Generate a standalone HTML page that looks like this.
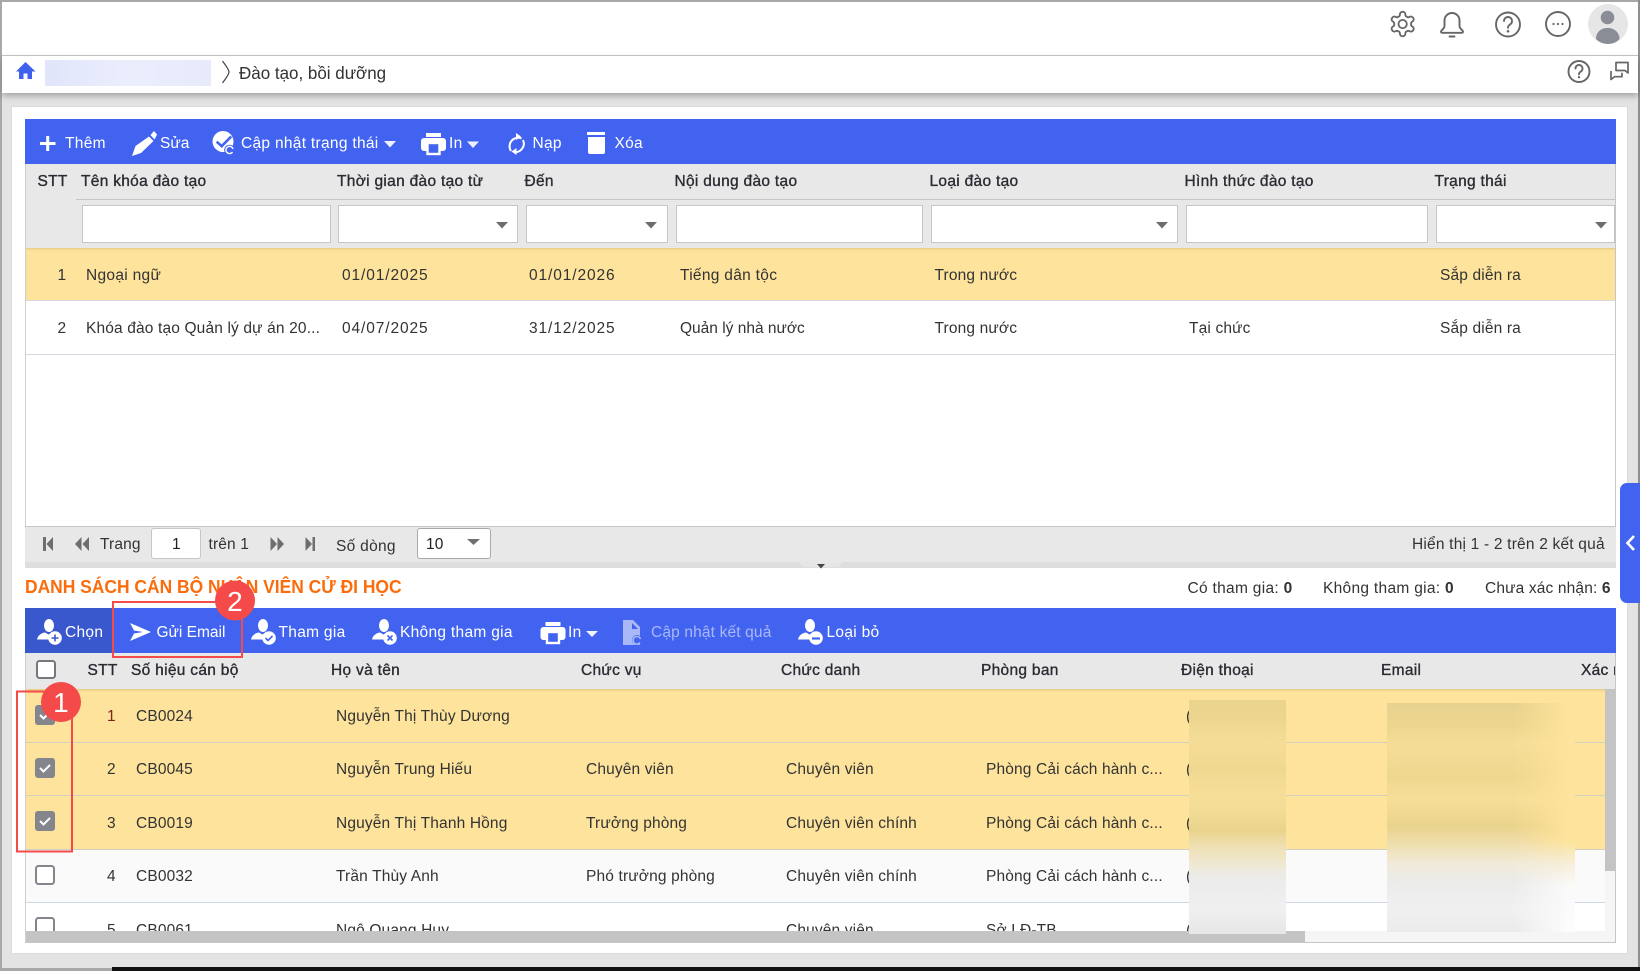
<!DOCTYPE html>
<html lang="vi"><head><meta charset="utf-8"><title>Đào tạo, bồi dưỡng</title>
<style>
html,body{margin:0;padding:0;width:1640px;height:971px;overflow:hidden;background:#e3e3e3}
body{position:relative;font-family:"Liberation Sans","Noto Sans CJK SC",sans-serif;font-size:15.5px;letter-spacing:.15px;color:#333}
.b{position:absolute}
.t{position:absolute;white-space:nowrap;line-height:20px;height:20px}
.h{-webkit-text-stroke:.35px currentColor;color:#2b2b33;letter-spacing:.3px}
.w{color:#fff;letter-spacing:.3px;margin-top:1px}
.d{letter-spacing:.9px}
.s{letter-spacing:.3px}
.i{position:absolute;background:#fff;border:1px solid #c6c6c6;box-sizing:border-box}
svg.o{position:absolute;left:0;top:0}
</style></head><body>
<!-- frame -->
<div class="b" style="left:0;top:0;width:1640px;height:2px;background:#a8a8a8"></div>
<div class="b" style="left:0;top:0;width:2px;height:971px;background:#a8a8a8"></div>
<div class="b" style="left:1638px;top:0;width:2px;height:971px;background:#8f8f8f"></div>
<div class="b" style="left:0;top:968px;width:112px;height:3px;background:#a8a8a8"></div>
<div class="b" style="left:112px;top:967px;width:1528px;height:4px;background:#111"></div>
<!-- header -->
<div class="b" style="left:2px;top:2px;width:1636px;height:53px;background:#fff"></div>
<div class="b" style="left:2px;top:55px;width:1636px;height:1px;background:#c8c8c8"></div>
<div class="b" style="left:2px;top:56px;width:1636px;height:37px;background:#fff;box-shadow:0 3px 6px rgba(0,0,0,.28)"></div>
<div class="b" style="left:45px;top:60px;width:166px;height:26px;background:linear-gradient(90deg,#e1e5fb,#eaeefc 50%,#e6eafb)"></div>
<div class="t" style="left:239px;top:63px;font-size:17.5px;letter-spacing:0;color:#333;transform-origin:0 50%;transform:scaleX(.97)">Đào tạo, bồi dưỡng</div>
<!-- main panel -->
<div class="b" style="left:12px;top:107px;width:1615px;height:846px;background:#fff;box-shadow:0 0 0 1px #dcdcdc"></div>
<!-- table 1 -->
<div class="b" style="left:25px;top:119px;width:1591px;height:45px;background:#4263ef"></div>
<div class="b" style="left:25px;top:164px;width:1591px;height:84px;background:#e8e8e8"></div>
<div class="b" style="left:76px;top:199px;width:1540px;height:1px;background:#c6c6c6"></div>
<div class="b" style="left:25px;top:164px;width:1px;height:398px;background:#cfcfcf"></div>
<div class="b" style="left:1615px;top:164px;width:1px;height:398px;background:#c6c6c6"></div>
<div class="i" style="left:82px;top:205px;width:249px;height:38px"></div>
<div class="i" style="left:338px;top:205px;width:180px;height:38px"></div>
<div class="i" style="left:526px;top:205px;width:142px;height:38px"></div>
<div class="i" style="left:676px;top:205px;width:247px;height:38px"></div>
<div class="i" style="left:931px;top:205px;width:247px;height:38px"></div>
<div class="i" style="left:1186px;top:205px;width:242px;height:38px"></div>
<div class="i" style="left:1436px;top:205px;width:179px;height:38px"></div>
<div class="b" style="left:26px;top:248px;width:1589px;height:52px;background:#fde39b;box-shadow:inset 0 2px 2px -1px rgba(150,120,60,.25);border-bottom:1px solid #d9d9d9;box-sizing:content-box"></div>
<div class="b" style="left:26px;top:354px;width:1589px;height:1px;background:#d5d8e0"></div>
<!-- toolbar1 text -->
<div class="t w" style="left:65px;top:133px">Thêm</div>
<div class="t w" style="left:160px;top:133px;letter-spacing:0">Sửa</div>
<div class="t w" style="left:241px;top:133px">Cập nhật trạng thái</div>
<div class="t w" style="left:449px;top:133px">In</div>
<div class="t w" style="left:532.5px;top:133px">Nạp</div>
<div class="t w" style="left:614.5px;top:133px">Xóa</div>
<!-- header text -->
<div class="t h" style="left:37.5px;top:172px">STT</div>
<div class="t h" style="left:81px;top:172px">Tên khóa đào tạo</div>
<div class="t h" style="left:337px;top:172px">Thời gian đào tạo từ</div>
<div class="t h" style="left:524.5px;top:172px">Đến</div>
<div class="t h" style="left:674.5px;top:172px">Nội dung đào tạo</div>
<div class="t h" style="left:929.5px;top:172px">Loại đào tạo</div>
<div class="t h" style="left:1184.5px;top:172px">Hình thức đào tạo</div>
<div class="t h" style="left:1434.5px;top:172px">Trạng thái</div>
<!-- rows 1 -->
<div class="t" style="left:57.5px;top:266px">1</div>
<div class="t s" style="left:86px;top:266px">Ngoại ngữ</div>
<div class="t d" style="left:342px;top:266px">01/01/2025</div>
<div class="t d" style="left:529px;top:266px">01/01/2026</div>
<div class="t s" style="left:680px;top:266px">Tiếng dân tộc</div>
<div class="t" style="left:934.5px;top:266px">Trong nước</div>
<div class="t" style="left:1440px;top:266px">Sắp diễn ra</div>
<div class="t" style="left:57.5px;top:319px">2</div>
<div class="t" style="left:86px;top:319px">Khóa đào tạo Quản lý dự án 20...</div>
<div class="t d" style="left:342px;top:319px">04/07/2025</div>
<div class="t d" style="left:529px;top:319px">31/12/2025</div>
<div class="t" style="left:680px;top:319px;letter-spacing:0">Quản lý nhà nước</div>
<div class="t" style="left:934.5px;top:319px">Trong nước</div>
<div class="t" style="left:1189px;top:319px">Tại chức</div>
<div class="t" style="left:1440px;top:319px">Sắp diễn ra</div>
<!-- pager -->
<div class="b" style="left:25px;top:526px;width:1591px;height:36px;background:#e8e8e8;border-top:1px solid #c6c6c6;box-sizing:border-box"></div>
<div class="b" style="left:25px;top:562px;width:1591px;height:6px;background:#dedede"></div>
<div class="b" style="left:799px;top:562px;width:44px;height:5px;background:#e6e6e6;clip-path:polygon(0 0,100% 0,90% 100%,10% 100%)"></div>
<div class="t" style="left:100px;top:535px">Trang</div>
<div class="i" style="left:151px;top:528px;width:50px;height:31px;border-radius:3px"></div>
<div class="t" style="left:172px;top:535px;color:#222">1</div>
<div class="t" style="left:208.5px;top:535px">trên 1</div>
<div class="t s" style="left:336px;top:537px">Số dòng</div>
<div class="i" style="left:417px;top:528px;width:74px;height:31px;border-radius:3px;border-color:#aaa"></div>
<div class="t" style="left:426px;top:535px;color:#222">10</div>
<div class="t" style="left:1412px;top:535px;letter-spacing:.2px">Hiển thị 1 - 2 trên 2 kết quả</div>
<!-- title -->
<div class="t" style="left:25px;top:577px;font-size:18.5px;letter-spacing:0;font-weight:bold;color:#fb6c0b;transform-origin:0 50%;transform:scaleX(.942)">DANH SÁCH CÁN BỘ NHÂN VIÊN CỬ ĐI HỌC</div>
<div class="t s" style="left:1187.5px;top:579px">Có tham gia: <b>0</b></div>
<div class="t s" style="left:1323px;top:579px">Không tham gia: <b>0</b></div>
<div class="t" style="left:1485px;top:579px">Chưa xác nhận: <b>6</b></div>
<!-- table 2 -->
<div class="b" style="left:25px;top:608px;width:1591px;height:45px;background:#4263ef"></div>
<div class="b" style="left:25px;top:608px;width:87px;height:45px;background:#3a58cd"></div>
<div class="b" style="left:25px;top:653px;width:1591px;height:36px;background:#e8e8e8"></div>
<div class="b" style="left:25px;top:653px;width:1px;height:290px;background:#cfcfcf"></div>
<div class="b" style="left:1615px;top:653px;width:1px;height:290px;background:#c6c6c6"></div>
<div class="b" style="left:26px;top:689px;width:1579px;height:160px;background:#fde39b"></div>
<div class="b" style="left:26px;top:689px;width:1579px;height:3px;background:linear-gradient(rgba(150,120,60,.22),transparent)"></div>
<div class="b" style="left:26px;top:850px;width:1579px;height:52px;background:#fafafa"></div>
<div class="b" style="left:26px;top:742px;width:1579px;height:1px;background:#d4d0c0"></div>
<div class="b" style="left:26px;top:795px;width:1579px;height:1px;background:#d4d0c0"></div>
<div class="b" style="left:26px;top:849px;width:1579px;height:1px;background:#cfcfc4"></div>
<div class="b" style="left:26px;top:902px;width:1579px;height:1px;background:#cdd5e6"></div>
<div class="t w" style="left:65px;top:622px">Chọn</div>
<div class="t w" style="left:156.5px;top:622px;letter-spacing:0">Gửi Email</div>
<div class="t w" style="left:278.5px;top:622px">Tham gia</div>
<div class="t w" style="left:400px;top:622px">Không tham gia</div>
<div class="t w" style="left:568px;top:622px">In</div>
<div class="t w" style="left:651px;top:622px;color:#a9b8f7;letter-spacing:.15px">Cập nhật kết quả</div>
<div class="t w" style="left:826.5px;top:622px">Loại bỏ</div>
<div class="t h" style="left:87.5px;top:661px">STT</div>
<div class="t h" style="left:131px;top:661px">Số hiệu cán bộ</div>
<div class="t h" style="left:331px;top:661px">Họ và tên</div>
<div class="t h" style="left:581px;top:661px">Chức vụ</div>
<div class="t h" style="left:781px;top:661px">Chức danh</div>
<div class="t h" style="left:981px;top:661px">Phòng ban</div>
<div class="t h" style="left:1181px;top:661px">Điện thoại</div>
<div class="t h" style="left:1381px;top:661px">Email</div>
<div class="b" style="left:1581px;top:653px;width:34px;height:36px;overflow:hidden"><div class="t h" style="left:0;top:8px">Xác nhận</div></div>
<!-- rows 2 -->
<div class="b" style="left:26px;top:689px;width:1579px;height:242px;overflow:hidden">
<div class="t" style="left:81px;top:18px;color:#7d2418">1</div><div class="t" style="left:110px;top:18px">CB0024</div><div class="t" style="left:310px;top:18px">Nguyễn Thị Thùy Dương</div><div class="t" style="left:1160px;top:18px">(</div>
<div class="t" style="left:81px;top:71px">2</div><div class="t" style="left:110px;top:71px">CB0045</div><div class="t" style="left:310px;top:71px">Nguyễn Trung Hiếu</div><div class="t" style="left:560px;top:71px">Chuyên viên</div><div class="t" style="left:760px;top:71px">Chuyên viên</div><div class="t" style="left:960px;top:71px">Phòng Cải cách hành c...</div><div class="t" style="left:1160px;top:71px">(</div>
<div class="t" style="left:81px;top:125px">3</div><div class="t" style="left:110px;top:125px">CB0019</div><div class="t" style="left:310px;top:125px">Nguyễn Thị Thanh Hồng</div><div class="t" style="left:560px;top:125px">Trưởng phòng</div><div class="t" style="left:760px;top:125px">Chuyên viên chính</div><div class="t" style="left:960px;top:125px">Phòng Cải cách hành c...</div><div class="t" style="left:1160px;top:125px">(</div>
<div class="t" style="left:81px;top:178px">4</div><div class="t" style="left:110px;top:178px">CB0032</div><div class="t" style="left:310px;top:178px">Trần Thùy Anh</div><div class="t" style="left:560px;top:178px">Phó trưởng phòng</div><div class="t" style="left:760px;top:178px">Chuyên viên chính</div><div class="t" style="left:960px;top:178px">Phòng Cải cách hành c...</div><div class="t" style="left:1160px;top:178px">(</div>
<div class="t" style="left:81px;top:232px">5</div><div class="t" style="left:110px;top:232px">CB0061</div><div class="t" style="left:310px;top:232px">Ngô Quang Huy</div><div class="t" style="left:760px;top:232px">Chuyên viên</div><div class="t" style="left:960px;top:232px">Sở LĐ-TB</div><div class="t" style="left:1160px;top:232px">(</div>
</div>
<!-- scrollbars -->
<div class="b" style="left:1605px;top:689px;width:10px;height:254px;background:#f5f5f5"></div>
<div class="b" style="left:1605px;top:689px;width:10px;height:182px;background:#c4c4c4"></div>
<div class="b" style="left:26px;top:931px;width:1589px;height:11px;background:#f5f5f5"></div>
<div class="b" style="left:26px;top:931px;width:1279px;height:11px;background:#c4c4c4"></div>
<div class="b" style="left:25px;top:942px;width:1591px;height:1px;background:#c6c6c6"></div>
<!-- blurred -->
<div class="b" style="left:1189px;top:700px;width:97px;height:234px;background:linear-gradient(#e9d38e 0,#ecd68f 8%,#f5dd98 18%,#efd890 30%,#f6de99 40%,#f2dc96 48%,#ead38c 56%,#efdfb0 62%,#efe8d2 70%,#ebebea 76%,#eeeeee 85%,#f0f0f0 90%,#e6e6e6 100%)"></div>
<div class="b" style="left:1387px;top:703px;width:188px;height:229px;background:linear-gradient(#fde39b 0,#fde39b 60%,#f6eed8 70%,#fafafa 80%,#fcfcfc 100%)"></div>
<div class="b" style="left:1387px;top:703px;width:188px;height:229px;background:linear-gradient(#e8d28f 0,#ecd68f 10%,#f5dd98 18%,#eed78f 32%,#f6de99 42%,#ead38c 54%,#efdfb0 62%,#f0ead8 70%,#ebebea 78%,#f0f0f0 90%,#ebebeb 100%);-webkit-mask-image:linear-gradient(90deg,#000 68%,transparent 96%);mask-image:linear-gradient(90deg,#000 68%,transparent 96%)"></div>
<!-- right tab -->
<div class="b" style="left:1620px;top:483px;width:20px;height:120px;background:#4263ef;border-radius:7px 0 0 7px"></div>

<svg class="o" width="1640" height="971" viewBox="0 0 1640 971" xmlns="http://www.w3.org/2000/svg">
<defs>
<g id="print"><rect x="5" y="0" width="15" height="4" fill="#fff"/><rect x="0" y="5" width="25" height="13" rx="3" fill="#fff"/><rect x="6.5" y="10" width="12" height="11" fill="#4263ef" stroke="#fff" stroke-width="2.4"/></g>
<g id="person"><ellipse cx="12" cy="6.5" rx="5" ry="6.5" fill="#fff"/><path d="M0 20.5C1 16 4.5 14 8 13.5L11.5 15.5 14 14C14 16 13 19 13.5 20.5Z" fill="#fff"/></g>
</defs>
<!-- top icons -->
<g transform="translate(1388 9.4) scale(1.22)" fill="none" stroke="#666" stroke-width="1.5" stroke-linejoin="round"><path d="M12.22 2h-.44a2 2 0 0 0-2 2v.18a2 2 0 0 1-1 1.73l-.43.25a2 2 0 0 1-2 0l-.15-.08a2 2 0 0 0-2.73.73l-.22.38a2 2 0 0 0 .73 2.73l.15.1a2 2 0 0 1 1 1.72v.51a2 2 0 0 1-1 1.74l-.15.09a2 2 0 0 0-.73 2.73l.22.38a2 2 0 0 0 2.73.73l.15-.08a2 2 0 0 1 2 0l.43.25a2 2 0 0 1 1 1.73V20a2 2 0 0 0 2 2h.44a2 2 0 0 0 2-2v-.18a2 2 0 0 1 1-1.73l.43-.25a2 2 0 0 1 2 0l.15.08a2 2 0 0 0 2.73-.73l.22-.39a2 2 0 0 0-.73-2.73l-.15-.08a2 2 0 0 1-1-1.74v-.5a2 2 0 0 1 1-1.74l.15-.09a2 2 0 0 0 .73-2.73l-.22-.38a2 2 0 0 0-2.73-.73l-.15.08a2 2 0 0 1-2 0l-.43-.25a2 2 0 0 1-1-1.73V4a2 2 0 0 0-2-2z"/><circle cx="12" cy="12" r="3.4"/></g>
<g fill="none" stroke="#666" stroke-width="1.9" stroke-linejoin="round" stroke-linecap="round"><path d="M1444.5 26V20.5a7.5 7.5 0 0 1 15 0V26c0 3 3 3.5 3.5 5.5 0 .7-.5 1.3-1.5 1.3h-19c-1 0-1.5-.6-1.5-1.3.5-2 3.5-2.5 3.5-5.5Z"/><path d="M1449.5 36.5h5"/></g>
<g fill="none" stroke="#666" stroke-width="1.9"><circle cx="1508" cy="24.5" r="12"/><path d="M1504 21a4 4 0 1 1 6 3.5c-1.3.8-2 1.5-2 3.3" stroke-linecap="round"/><circle cx="1558" cy="24" r="12"/><circle cx="1579" cy="71.5" r="10.5"/><path d="M1575.5 68.5a3.5 3.5 0 1 1 5.3 3c-1.1.7-1.8 1.3-1.8 2.8" stroke-linecap="round"/><path d="M1611 71v8.5l3.5-2.8h7.5v-4M1616 62.5h12v10.5l-3-2.5h-9Z" stroke-linejoin="round" stroke-width="1.7"/></g>
<circle cx="1508" cy="31.3" r="1.3" fill="#666"/><circle cx="1579" cy="77.2" r="1.2" fill="#666"/>
<circle cx="1553.5" cy="24" r="1.1" fill="#666"/><circle cx="1558" cy="24" r="1.1" fill="#666"/><circle cx="1562.5" cy="24" r="1.1" fill="#666"/>
<circle cx="1608" cy="24" r="20" fill="#e6e6e6"/><circle cx="1607.5" cy="17.5" r="6.8" fill="#8a8d96"/><path d="M1596 39c0-7 5-11 11.5-11S1619.5 32 1619.5 39c-3 3.2-7 5-11.500 5s-9-1.800-12-5Z" fill="#8a8d96"/>
<!-- breadcrumb -->
<path d="M25.5 62 16 71.5h3V79h4.5v-5.500h4V79H32v-7.500h3.500Z" fill="#3f62ee"/>
<path d="M222.5 61C227 67 229 70 229 72c0 2-2 5-6.500 11" fill="none" stroke="#444" stroke-width="1.2"/>
<!-- toolbar 1 icons -->
<path d="M46.200 136h3v6h6.300v3h-6.300v6h-3v-6H40v-3h6.200Z" fill="#fff"/>
<path d="M132 156l3.500-10 13.500-9.500 4.500 4.500-12.500 12Zm18.500-21l3.500-4 3 3.500-2.500 5Z" fill="#fff"/>
<circle cx="223" cy="141.500" r="10.500" fill="#fff"/><path d="M216.700 141.700l5 4.500 9.500-9.700" fill="none" stroke="#4263ef" stroke-width="2.600"/>
<circle cx="229.500" cy="150" r="5.300" fill="#4263ef"/><path d="M233 149a3.600 3.600 0 1 0-.5 3" fill="none" stroke="#fff" stroke-width="1.400"/>
<path d="M384 141h12l-6 6.500Z M467 141.500h12l-6 6.500Z" fill="#eef1ff"/>
<use href="#print" x="421" y="133"/>
<g fill="none" stroke="#fff" stroke-width="2"><path d="M521.500 138.500A8.500 8.500 0 0 0 511 151"/><path d="M523 140a8.500 8.500 0 0 1-9 12"/></g>
<path d="M516 133v7l5-3.500Z M516.500 155v-7l-5 3.500Z" fill="#fff"/>
<path d="M587 132h18v3h-18Z M588 137h17v15a2 2 0 0 1-2 2h-13a2 2 0 0 1-2-2Z" fill="#fff"/>
<!-- filter carets -->
<path d="M496 222h12l-6 6.500Z M645 222h12l-6 6.500Z M1156 222h12l-6 6.500Z M1595 222h12l-6 6.500Z" fill="#6d6d6d"/>
<!-- pager icons -->
<path d="M43 537h3v14h-3Zm10 0v14l-6.500-7Z" fill="#6e6e6e"/>
<path d="M81.500 537v14l-6.500-7Zm7.500 0v14l-6.500-7Z" fill="#6e6e6e"/>
<path d="M270.500 537v14l6.500-7Zm7 0v14l6.500-7Z" fill="#6e6e6e"/>
<path d="M305.500 537v14l6.500-7Zm7 0h2.500v14h-2.500Z" fill="#6e6e6e"/>
<path d="M467 539h13l-6.500 6Z" fill="#707070"/>
<path d="M817 564h8l-4 4.500Z" fill="#444"/>
<!-- right tab chevron -->
<path d="M1634 536l-6.500 7 6.500 7" fill="none" stroke="#fff" stroke-width="2.600"/>
<!-- toolbar 2 icons -->
<use href="#person" x="37" y="619"/><circle cx="55" cy="638" r="6.800" fill="#fff"/><path d="M55 634.500v7M51.500 638h7" stroke="#3a58cd" stroke-width="1.600"/>
<path d="M130 623l21 9-21 9 4-7.500 9-1.500-9-1.500Z" fill="#fff"/>
<use href="#person" x="251" y="619"/><circle cx="269" cy="638" r="6.800" fill="#fff"/><path d="M265.500 638l2.500 2.500 4.500-4.500" fill="none" stroke="#4263ef" stroke-width="1.600"/>
<use href="#person" x="372" y="619"/><circle cx="390" cy="638" r="6.800" fill="#fff"/><path d="M387.500 635.500l5 5M392.500 635.500l-5 5" stroke="#4263ef" stroke-width="1.600"/>
<use href="#print" x="540.500" y="622"/>
<path d="M586 631h12l-6 6Z" fill="#f0f3ff"/>
<path d="M623 620h10l7 7v18h-17Z" fill="#a9b8f7"/><path d="M632 623v6h6Z" fill="#4263ef"/><circle cx="637" cy="640" r="5" fill="#4263ef"/><path d="M640.500 639a3.800 3.800 0 1 0-.5 3.500" fill="none" stroke="#a9b8f7" stroke-width="1.500"/>
<use href="#person" x="798" y="619"/><circle cx="816" cy="638" r="6.800" fill="#fff"/><path d="M812 638.500h8" stroke="#4263ef" stroke-width="2.200"/>
<!-- checkboxes -->
<rect x="37" y="661" width="18" height="17" rx="2.500" fill="#fff" stroke="#77777f" stroke-width="2"/>
<g><rect x="35" y="705" width="20" height="20" rx="3" fill="#85858e"/><path d="M40 715l3.500 3.500 6.500-6.500" fill="none" stroke="#fff" stroke-width="2"/>
<rect x="35" y="758" width="20" height="20" rx="3" fill="#85858e"/><path d="M40 768l3.500 3.500 6.500-6.500" fill="none" stroke="#fff" stroke-width="2"/>
<rect x="35" y="811" width="20" height="20" rx="3" fill="#85858e"/><path d="M40 821l3.500 3.500 6.500-6.500" fill="none" stroke="#fff" stroke-width="2"/></g>
<rect x="36" y="866" width="18" height="18" rx="2.500" fill="#fff" stroke="#85858e" stroke-width="2"/>
<path d="M36 931v-10.500a2.500 2.500 0 0 1 2.500-2.500h13a2.500 2.500 0 0 1 2.500 2.500V931" fill="#fff" stroke="#85858e" stroke-width="2"/>
<!-- annotations -->
<rect x="113" y="602" width="129" height="55" fill="none" stroke="#f44a4a" stroke-width="2"/>
<rect x="17" y="691.500" width="55" height="160" fill="none" stroke="#f44a4a" stroke-width="2"/>
<circle cx="61" cy="702" r="20" fill="#f44a4a"/><circle cx="235" cy="600.500" r="20" fill="#f44a4a"/>
<text x="61" y="712" text-anchor="middle" font-family="Liberation Sans,sans-serif" font-size="28" fill="#fff">1</text>
<text x="235" y="611" text-anchor="middle" font-family="Liberation Sans,sans-serif" font-size="28" fill="#fff">2</text>
</svg>
</body></html>
